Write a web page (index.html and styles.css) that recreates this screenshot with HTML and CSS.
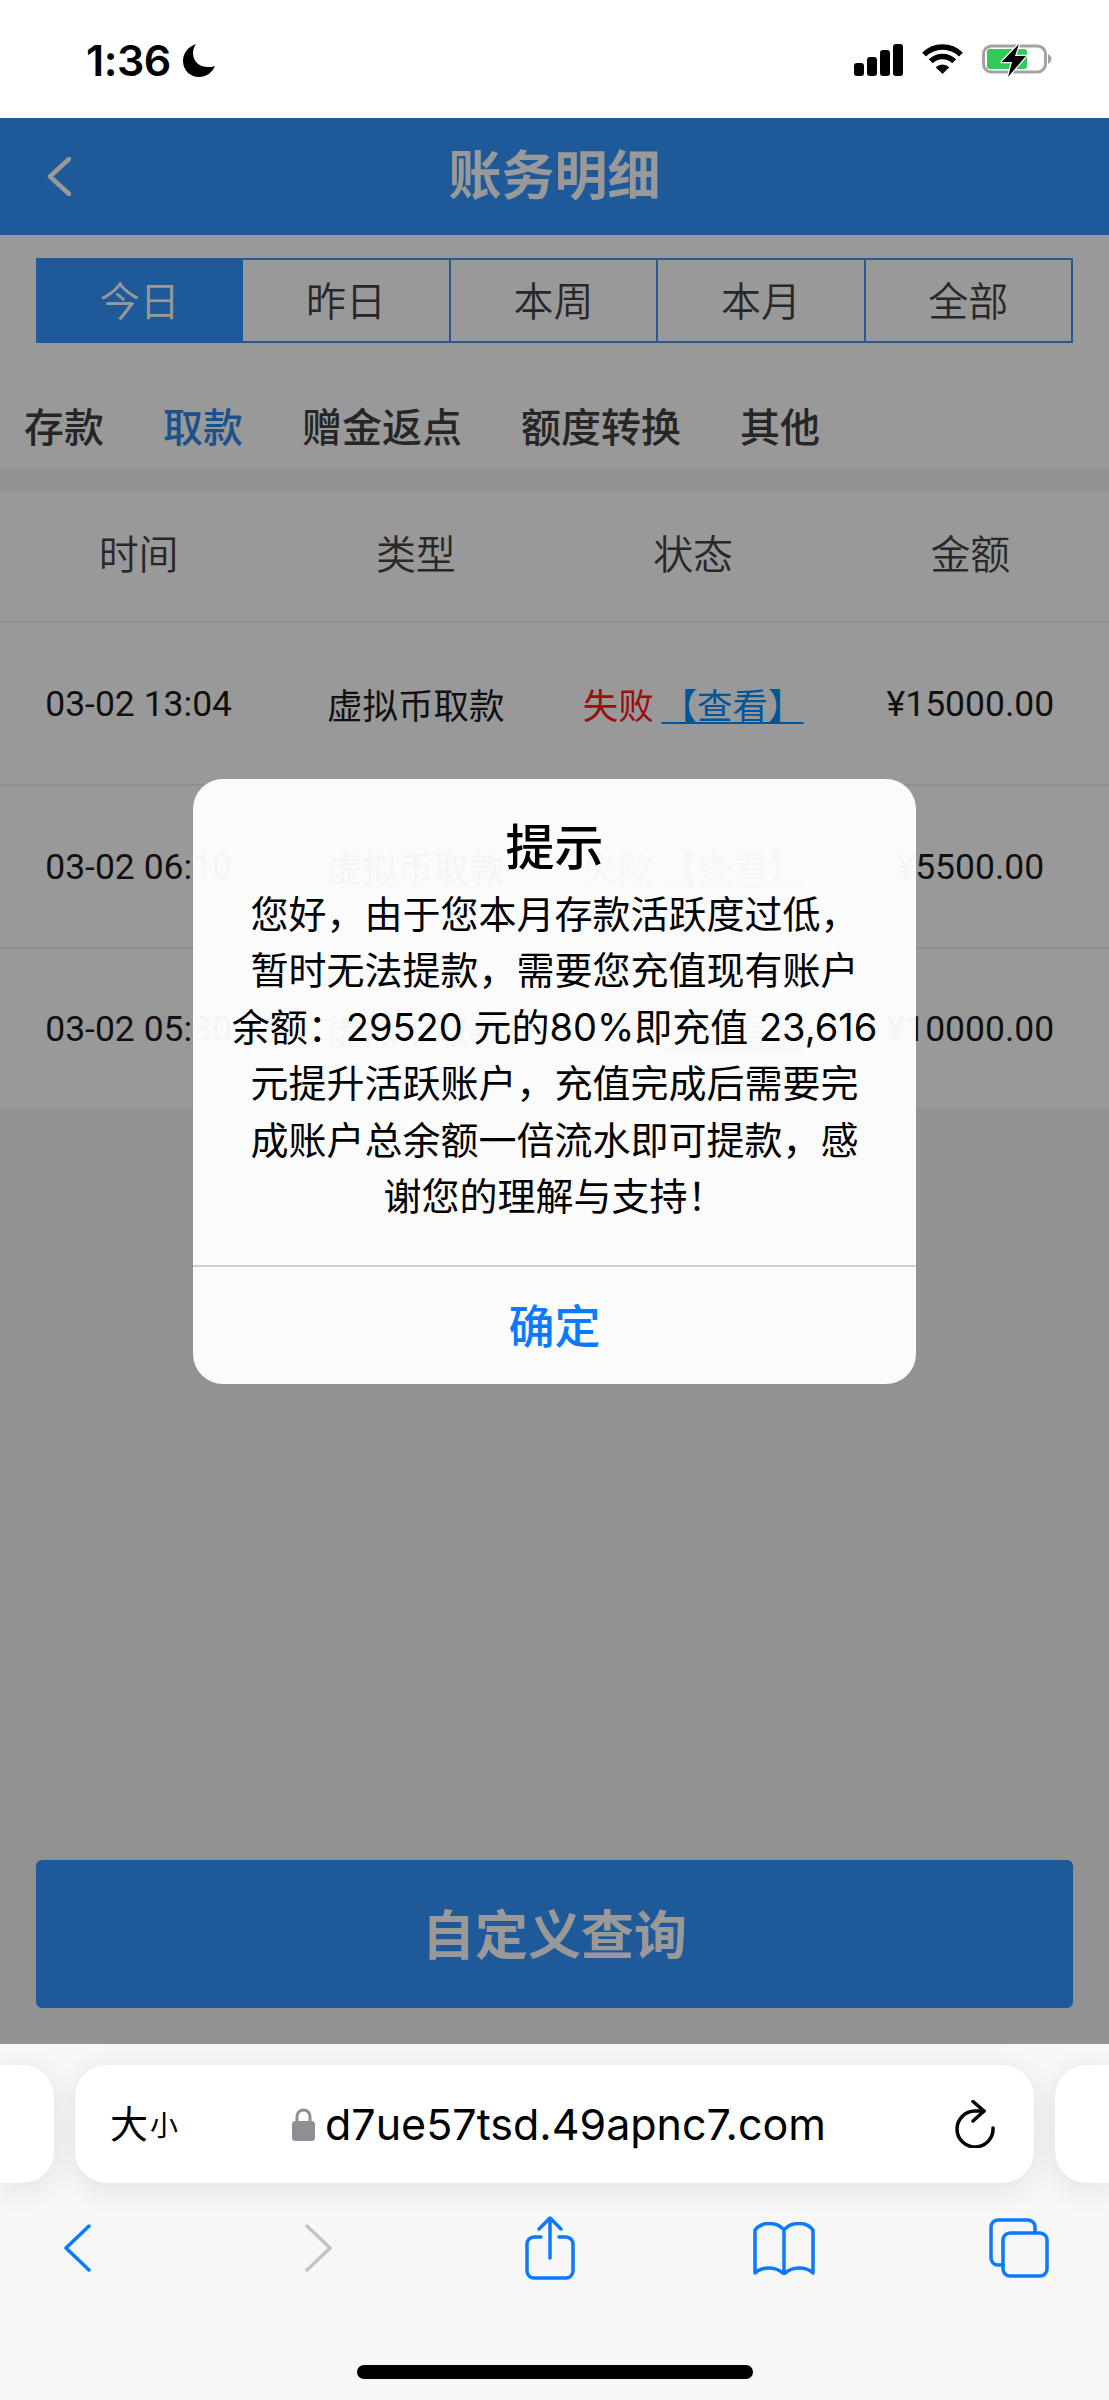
FILE: index.html
```html
<!DOCTYPE html>
<html lang="zh">
<head>
<meta charset="utf-8">
<title>账务明细</title>
<link rel="stylesheet" href="styles.css">
</head>
<body>
<div class="phone">
  <div class="status">
    <div class="status-left">
      <span class="clock">1:36</span>
      <svg class="moon" viewBox="0 0 32 33"><path d="M13 0C5 3 0 9 0 17c0 9 7 16 16 16 7 0 13-4 16-11-2 1-5 1-7 1-9 0-15-6-15-14 0-3 1-6 3-9z"/></svg>
    </div>
    <div class="status-right">
      <svg class="signal" viewBox="0 0 49 32"><rect x="0" y="19" width="10" height="13" rx="3"/><rect x="13" y="13" width="10" height="19" rx="3"/><rect x="26" y="6" width="10" height="26" rx="3"/><rect x="39" y="0" width="10" height="32" rx="3"/></svg>
      <svg class="wifi" viewBox="0 0 41 30"><path class="wifi-arc" d="M2.1 10.6a26 26 0 0 1 36.8 0"/><path class="wifi-arc" d="M8.8 17.3a16.5 16.5 0 0 1 23.4 0"/><path d="M20.5 30l-6.8-6.8a9.6 9.6 0 0 1 13.6 0z"/></svg>
      <svg class="battery" viewBox="0 0 70 33"><rect class="batt-body" x="1.500" y="2" width="62" height="26" rx="8"/><rect class="batt-fill" x="5" y="5" width="40" height="20" rx="3"/><path class="batt-nub" d="M66 10c2 1 3.500 3 3.500 5s-1.500 4-3.500 5z"/><path class="batt-bolt" d="M37 0L19.500 18H30l-4 15 18-21H33z"/></svg>
    </div>
  </div>

  <main class="page">
    <header class="topbar">
      <svg class="back" viewBox="0 0 24 39"><path d="M22 2L3 19.500 22 37"/></svg>
      <h1 class="title">账务明细</h1>
    </header>

    <div class="segments">
      <div class="seg seg-on">今日</div>
      <div class="seg">昨日</div>
      <div class="seg">本周</div>
      <div class="seg">本月</div>
      <div class="seg">全部</div>
    </div>

    <nav class="tabs">
      <span class="tab">存款</span>
      <span class="tab tab-on">取款</span>
      <span class="tab">赠金返点</span>
      <span class="tab">额度转换</span>
      <span class="tab">其他</span>
    </nav>

    <section class="table">
      <div class="row row-head">
        <div>时间</div><div>类型</div><div>状态</div><div>金额</div>
      </div>
      <div class="row">
        <div>03-02 13:04</div><div>虚拟币取款</div>
        <div><span class="fail">失败</span> <span class="look">【查看】</span></div>
        <div>¥15000.00</div>
      </div>
      <div class="row">
        <div>03-02 06:10</div><div>虚拟币取款</div>
        <div><span class="fail">失败</span> <span class="look">【查看】</span></div>
        <div>¥5500.00</div>
      </div>
      <div class="row row-last">
        <div>03-02 05:30</div><div>虚拟币取款</div>
        <div><span class="fail">失败</span> <span class="look">【查看】</span></div>
        <div>¥10000.00</div>
      </div>
    </section>

    <button class="query">自定义查询</button>

    <div class="overlay">
      <div class="dialog">
        <div class="dialog-body">
          <div class="dialog-title">提示</div>
          <p class="dialog-text">您好，由于您本月存款活跃度过低，<br>暂时无法提款，需要您充值现有账户<br>余额：29520 元的80%即充值 23,616<br>元提升活跃账户，充值完成后需要完<br>成账户总余额一倍流水即可提款，感<br>谢您的理解与支持！</p>
        </div>
        <div class="dialog-btn">确定</div>
      </div>
    </div>
  </main>

  <footer class="safari">
    <div class="url-row">
      <div class="peek peek-l"></div>
      <div class="url">
        <span class="aa"><span class="aa-big">大</span><span class="aa-small">小</span></span>
        <span class="addr">
          <svg class="lock" viewBox="0 0 23 34"><path class="lock-shackle" d="M5 15V9.500a6.500 6.500 0 0 1 13 0V15"/><rect x="0" y="14" width="23" height="20" rx="3.500"/></svg>
          <span class="domain">d7ue57tsd.49apnc7.com</span>
        </span>
        <svg class="reload" viewBox="0 0 40 48"><path d="M38 28A18 18 0 1 1 20 11h9"/><path d="M18 1.500l11 9.500-11 10"/></svg>
      </div>
      <div class="peek peek-r"></div>
    </div>
    <div class="nav">
      <svg class="nav-back" viewBox="0 0 28 48"><path d="M26 2L3 24l23 22"/></svg>
      <svg class="nav-fwd" viewBox="0 0 28 48"><path d="M2 2l23 22L2 46"/></svg>
      <svg class="nav-share" viewBox="0 0 50 64"><path d="M16 21H9a7 7 0 0 0-7 7v27a7 7 0 0 0 7 7h32a7 7 0 0 0 7-7V28a7 7 0 0 0-7-7h-7"/><path d="M25 42V2M14 13L25 2l11 11"/></svg>
      <svg class="nav-book" viewBox="0 0 62 53"><path d="M31 8C27 3 21 1.500 16 1.500 10 1.500 5 4 2 8v43c4-4 9-5 14-5 6 0 11 2 15 6 4-4 9-6 15-6 5 0 10 1 14 5V8c-3-4-8-6.500-14-6.500-5 0-11 1.500-15 6.500zM31 8v44"/></svg>
      <svg class="nav-tabs" viewBox="0 0 60 60"><path d="M14 47H9a7 7 0 0 1-7-7V9a7 7 0 0 1 7-7h30a7 7 0 0 1 7 7v5"/><rect x="14" y="15" width="44" height="43" rx="7"/></svg>
    </div>
    <div class="home"></div>
  </footer>
</div>
</body>
</html>
```
FILE: styles.css
```css
* { box-sizing: border-box; }
html, body { margin: 0; padding: 0; }
body { font-family: "Inter", "Noto Sans CJK SC", sans-serif; background: #fff; }
.phone { width: 1109px; height: 2400px; display: flex; flex-direction: column; overflow: hidden; }

.status { height: 118px; flex: none; display: flex; justify-content: space-between; padding: 44px 57px 0 86px; background: #fff; }
.status-left { display: flex; align-items: flex-start; gap: 12px; }
.clock { font-size: 43px; font-weight: 600; line-height: 33px; letter-spacing: -.5px; color: #000; }
.moon { width: 32px; height: 33px; fill: #000; }
.status-right { display: flex; align-items: flex-start; }
.signal { width: 49px; height: 32px; fill: #000; }
.wifi { width: 41px; height: 30px; margin-left: 19px; fill: #000; }
.wifi-arc { fill: none; stroke: #000; stroke-width: 5.500; }
.battery { width: 70px; height: 33px; margin-left: 19px; }
.batt-body { fill: none; stroke: #a3a3a3; stroke-width: 3; }
.batt-fill { fill: #34c759; }
.batt-nub { fill: #a3a3a3; }
.batt-bolt { fill: #000; stroke: #fff; stroke-width: 2.500; paint-order: stroke; stroke-linejoin: round; }

.page { flex: 1; position: relative; display: flex; flex-direction: column; background: #f3f3f3; }
.topbar { height: 117px; flex: none; display: grid; grid-template-columns: 1fr auto 1fr; align-items: center; padding: 0 47px; background: #3396ff; color: #fff; }
.back { width: 24px; height: 39px; fill: none; stroke: #fff; stroke-width: 4.500; stroke-linecap: round; stroke-linejoin: round; }
.title { margin: 0; font-size: 53px; line-height: 1; font-weight: 700; }

.segments { flex: none; background: #fff; padding: 23px 36px 0; display: grid; grid-template-columns: repeat(5, 1fr); height: 108px; }
.seg { height: 85px; padding-bottom: 3px; display: flex; align-items: center; justify-content: center; font-size: 40px; font-weight: 350; color: #444; border: 2px solid #4a94e8; border-left-width: 0; }
.seg:first-child { border-left-width: 2px; }
.seg-on { background: #3396ff; color: #fff; border-color: #3396ff; }

.tabs { flex: none; height: 125px; background: #fff; display: flex; gap: 59px; padding: 63px 0 0 24px; font-size: 40px; font-weight: 500; line-height: 44px; color: #404040; }
.tab-on { color: #2f88e8; }

.table { flex: none; margin-top: 23px; background: #fff; font-family: "Roboto", "Noto Sans CJK SC", sans-serif; }
.row { display: grid; grid-template-columns: repeat(4, 1fr); align-items: center; text-align: center; height: 163px; font-size: 35.500px; font-weight: 400; color: #1c1c1c; border-bottom: 2px solid #efefef; }
.row-head { height: 132px; padding-bottom: 8px; font-size: 40px; font-weight: 350; color: #444; }
.row-last { height: 160px; border-bottom: 0; }
.fail { color: #ff1a1a; }
.look { color: #0090ff; text-decoration: underline; text-decoration-thickness: 2px; text-underline-offset: 3px; margin-left: -1px; }

.query { margin: auto 36px 36px; padding-bottom: 5px; flex: none; height: 148px; border: 0; border-radius: 6px; background: #3396ff; color: #fff; font-family: inherit; font-size: 53px; font-weight: 700; }

.overlay { position: absolute; inset: 0; background: rgba(0, 0, 0, .4); display: flex; align-items: center; justify-content: center; }
.dialog { width: 723px; height: 605px; border-radius: 30px; background: rgba(255, 255, 255, .96); display: flex; flex-direction: column; }
.dialog-body { flex: 1; text-align: center; padding-top: 39px; }
.dialog-title { font-size: 49px; font-weight: 500; line-height: 60px; color: #000; }
.dialog-text { margin: 8px 0 0; font-size: 38px; line-height: 56.600px; color: #000; white-space: nowrap; }
.dialog-btn { height: 119px; padding-bottom: 4px; border-top: 2px solid #d0d0d0; display: flex; align-items: center; justify-content: center; font-size: 46px; font-weight: 500; color: #0a7aff; }

.safari { height: 356px; flex: none; background: #f7f7f7; padding-top: 21px; display: flex; flex-direction: column; }
.url-row { display: flex; gap: 21px; height: 118px; flex: none; }
.peek { width: 54px; background: #fff; box-shadow: 0 6px 30px rgba(0, 0, 0, .09); }
.peek-l { border-radius: 0 32px 32px 0; }
.peek-r { border-radius: 32px 0 0 32px; }
.url { flex: 1; background: #fff; border-radius: 32px; box-shadow: 0 6px 30px rgba(0, 0, 0, .09); display: flex; align-items: center; padding: 0 39px 0 35px; color: #000; }
.aa { width: 110px; display: flex; align-items: flex-end; gap: 2px; font-weight: 400; }
.aa-big { font-size: 38px; line-height: 44px; }
.aa-small { font-size: 28px; line-height: 40px; }
.addr { display: flex; align-items: center; gap: 10px; margin-left: 72px; }
.lock { width: 23px; height: 34px; fill: #8e8e93; }
.lock-shackle { fill: none; stroke: #8e8e93; stroke-width: 3; }
.domain { font-size: 43px; }
.reload { width: 40px; height: 48px; margin-left: auto; fill: none; stroke: #000; stroke-width: 3.500; stroke-linecap: round; stroke-linejoin: round; }

.nav { height: 130px; flex: none; display: flex; align-items: center; }
.nav svg { flex: none; fill: none; stroke: #0a7aff; stroke-width: 3.500; stroke-linecap: round; stroke-linejoin: round; }
.nav-back { width: 28px; height: 48px; margin-left: 63px; }
.nav .nav-fwd { width: 28px; height: 48px; margin-left: 214px; stroke: #c4c4c4; }
.nav-share { width: 50px; height: 64px; margin-left: 192px; }
.nav-book { width: 62px; height: 53px; margin-left: 178px; }
.nav-tabs { width: 60px; height: 60px; margin-left: 174px; }
.home { width: 396px; height: 14px; border-radius: 7px; background: #000; margin: 52px auto 0; flex: none; }
```
